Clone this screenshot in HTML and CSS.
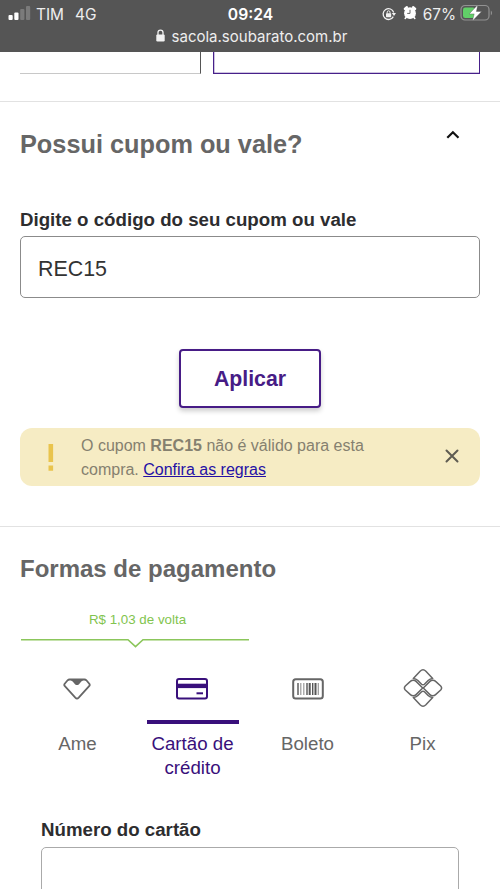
FILE: index.html
```html
<!DOCTYPE html>
<html lang="pt-BR">
<head>
<meta charset="utf-8">
<meta name="viewport" content="width=device-width, initial-scale=1">
<title>Sacola</title>
<link rel="stylesheet" href="styles.css">
</head>
<body>
<header class="browser">
  <div class="status">
    <div class="status-left">
      <svg class="signal" width="23" height="15" viewBox="0 0 23 15"><rect x=".5" y="10" width="4.2" height="5" rx="1" fill="#fff"/><rect x="6.3" y="7.5" width="4.2" height="7.5" rx="1" fill="#fff"/><rect x="12.2" y="4" width="4.2" height="11" rx="1" fill="#7b7b7b"/><rect x="18" y="1" width="4.2" height="14" rx="1" fill="#7b7b7b"/></svg>
      <span class="carrier">TIM</span>
      <span class="network">4G</span>
    </div>
    <div class="clock">09:24</div>
    <div class="status-right">
      <svg class="lock-rotation" width="14" height="14" viewBox="0 0 14 14"><path d="M11.3 9.6A5.4 5.4 0 1 1 11.7 5.5" fill="none" stroke="#f2f2f2" stroke-width="1.3"/><path d="M9.8 6H14l-2 2.9z" fill="#f2f2f2"/><rect x="4" y="6.2" width="5.2" height="4" rx=".6" fill="#f2f2f2"/><path d="M5.2 6.5V5.2a1.4 1.4 0 0 1 2.8 0v1.3" fill="none" stroke="#f2f2f2"/></svg>
      <svg class="alarm" width="14" height="15" viewBox="0 0 14 15"><circle cx="7" cy="8.2" r="5.9" fill="#fff"/><path d="M1.9 4 3.9 2.2M10.1 2.2l2 1.8" stroke="#fff" stroke-width="2.4" stroke-linecap="round"/><path d="m3 12.4-.8 1M11 12.4l.8 1" stroke="#fff" stroke-width="1.6" stroke-linecap="round"/><path d="M7 4.8V8.4H4.2" fill="none" stroke="#666"/></svg>
      <span class="percent">67%</span>
      <svg class="battery" width="33" height="18" viewBox="0 0 33 18"><rect x="1" y="1.5" width="28" height="14.5" rx="4" fill="none" stroke="#929292" stroke-width="1.2"/><rect x="3" y="3.5" width="12" height="10.5" rx="2.2" fill="#61cf68"/><path d="M30.8 6.4c1.6.7 1.6 4.1 0 4.8z" fill="#929292"/><path d="M17.800.8 9.2 9.900h5L12.400 17l9.200-9.500h-5.200z" fill="#fff" stroke="#555" stroke-width=".4"/></svg>
    </div>
  </div>
  <div class="address">
    <svg width="9" height="13" viewBox="0 0 9 13"><rect x=".3" y="5.4" width="8.4" height="7" rx="1.2" fill="#f2f2f2"/><path d="M2 6V3.6a2.5 2.5 0 0 1 5 0V6" fill="none" stroke="#f2f2f2" stroke-width="1.3"/></svg>
    <span class="url">sacola.soubarato.com.br</span>
  </div>
</header>

<main>
  <div class="options">
    <div class="option"></div>
    <div class="option option-active"></div>
  </div>

  <section class="coupon">
    <div class="coupon-head">
      <h2 class="coupon-title">Possui cupom ou vale?</h2>
      <svg class="chevron" width="14" height="10" viewBox="0 0 14 10"><path d="m1.3 7.8 5.6-5.5 5.6 5.5" fill="none" stroke="#111" stroke-width="2.200"/></svg>
    </div>
    <label class="label" for="coupon">Digite o código do seu cupom ou vale</label>
    <input class="field" id="coupon" value="REC15">
    <button class="apply">Aplicar</button>
    <div class="alert">
      <svg class="exclaim" width="6" height="27" viewBox="0 0 6 27"><path d="M.5 0h4.600v18H.5zM.5 21.500h4.600v5.300H.5z" fill="#e9c44d"/></svg>
      <p class="alert-text">O cupom <b>REC15</b> não é válido para esta<br>compra. <a href="#">Confira as regras</a></p>
      <svg class="close" width="14" height="14" viewBox="0 0 14 14"><path d="m1.500 1.500 11 11M12.500 1.500l-11 11" stroke="#5f5c52" stroke-width="2" stroke-linecap="round"/></svg>
    </div>
  </section>

  <section class="payment">
    <h2 class="payment-title">Formas de pagamento</h2>
    <div class="cashback">
      <span>R$ 1,03 de volta</span>
      <svg width="229" height="10" viewBox="0 0 229 10"><path d="M0 1.700H107l7.500 7 7.500-7h106" fill="none" stroke="#8bc65b" stroke-width="1.600"/></svg>
    </div>
    <nav class="tabs">
      <a class="tab">
        <span class="tab-icon"><svg width="28" height="22" viewBox="0 0 28 22"><path d="M6.500 1.500h15c.8 0 1.400.3 1.900.8l2.900 3.500c.6.8.5 1.700-.2 2.400L15.700 19.600c-1 1-2.400 1-3.400 0L1.900 8.200c-.7-.7-.8-1.600-.2-2.400L4.600 2.300c.5-.5 1.100-.8 1.900-.8z" fill="none" stroke="#666" stroke-width="1.800"/><path d="M7 1h14c-1 1.500-2 1.900-3.300 3.200l-1.700 2c-1.200 1.200-2.800 1.200-4 0l-1.700-2C9 2.900 8 2.500 7 1z" fill="#666"/></svg></span>
        <span class="tab-name">Ame</span>
      </a>
      <a class="tab tab-active">
        <span class="tab-icon"><svg width="32" height="22" viewBox="0 0 32 22"><rect x="1" y="1" width="30" height="19.500" rx="2" fill="none" stroke="#39107b" stroke-width="2"/><path d="M1 5.700h30v4.400H1z" fill="#39107b"/><path d="M20.500 15.300H27" stroke="#39107b" stroke-width="2"/></svg></span>
        <span class="tab-name">Cartão de crédito</span>
      </a>
      <a class="tab tab-boleto">
        <span class="tab-icon"><svg width="32" height="22" viewBox="0 0 32 22"><rect x="1.200" y="1.200" width="29.600" height="19.200" rx="2.500" fill="none" stroke="#666" stroke-width="2"/><path d="M6 5v12M15 5v12M20.700 5v12" stroke="#555" stroke-width="1.400"/><path d="M8.800 5v12M11.800 5v12M26.300 5v12" stroke="#999" stroke-width="1.200"/><path d="M17.700 5v12M23.500 5v12" stroke="#555" stroke-width="2"/></svg></span>
        <span class="tab-name">Boleto</span>
      </a>
      <a class="tab tab-pix">
        <span class="tab-icon"><svg width="40" height="40" viewBox="0 0 40 40"><g fill="none" stroke="#666" stroke-width="1.500" stroke-linejoin="round"><path d="M10.300 10.500 17.100 3.200c2-2 3.800-2 5.800 0l6.800 7.300c-2 .1-3.300.7-4.600 2L21.400 16.200q-1.400 1.200-2.800 0L14.900 12.500c-1.300-1.300-2.600-1.900-4.600-2z"/><path d="M10.300 29.500 17.100 36.800c2 2 3.800 2 5.800 0l6.800-7.300c-2-.1-3.300-.7-4.600-2L21.400 23.800q-1.400-1.200-2.800 0L14.900 27.500c-1.300 1.300-2.600 1.900-4.600 2z"/><path d="M19.700 20 13.100 13.400a4 4 0 0 0-5.700 0L2.300 18a3 3 0 0 0 0 4l5.100 4.600a4 4 0 0 0 5.700 0zM20.300 20l6.600-6.600a4 4 0 0 1 5.700 0l5.100 4.600a3 3 0 0 1 0 4l-5.100 4.600a4 4 0 0 1-5.700 0z"/></g></svg></span>
        <span class="tab-name">Pix</span>
      </a>
    </nav>
    <div class="card-form">
      <label class="label" for="card">Número do cartão</label>
      <input class="field field-card" id="card">
    </div>
  </section>
</main>
</body>
</html>
```
FILE: styles.css
```css
* { box-sizing: border-box; }
html, body { height: 889px; overflow: hidden; }
body { margin: 0; background: #fff; color: #666; font-family: "Liberation Sans", Arial, sans-serif; }
h2, p { margin: 0; }

.browser { height: 52px; background: #555; color: #eee; font: 15.4px/20px Inter, sans-serif; }
.status { display: grid; grid-template-columns: 1fr auto 1fr; height: 26px; padding: 4px 7px 0 8px; }
.status-left { display: flex; }
.signal { margin: 1px 6px 0 0; }
.carrier, .network, .clock, .percent { padding-top: 1px; }
.carrier { margin-left: -1px; }
.network { margin-left: 11px; }
.clock { color: #fff; font-weight: 600; font-size: 15.7px; }
.status-right { display: flex; justify-content: flex-end; }
.lock-rotation { margin: 3px 7px 0 0; }
.alarm { margin: 1px 6px 0 0; }
.battery { margin: 0 0 0 4px; }
.address { display: flex; justify-content: center; gap: 7px; padding-left: 3px; }
.address svg { margin-top: 3px; }
.url { font-size: 15px; line-height: 21px; }

.options { display: flex; gap: 12px; height: 49px; padding: 0 20px; }
.option { width: 181px; height: 22px; border: solid #555; border-width: 0 1px 1px 0; border-bottom-color: #c8c8c8; }
.option-active { width: 267px; border: solid #47208a; border-width: 0 1px 1px; box-shadow: inset 0 -1px #47208a44, inset 1px 0 #47208a44; }

.coupon { display: flex; flex-direction: column; height: 425px; border-top: 1px solid #e2e2e2; padding: 0 20px; }
.coupon-head { display: flex; justify-content: space-between; padding: 27px 20px 0 0; height: 104px; }
.coupon-title { font-size: 25.3px; line-height: 30px; }
.chevron { margin-top: 1px; }
.label { display: block; color: #2d2d2f; font-size: 18.7px; line-height: 28px; font-weight: 700; }
.field { display: block; width: 100%; height: 62px; margin-top: 3px; padding: 4px 17px 0; border: 1px solid #8b8b8b; border-radius: 5px; background: #fff; color: #333; font: 21.4px "Liberation Sans", Arial, sans-serif; }
.coupon .field { flex: none; margin-top: 2px; }
.coupon-head, .apply, .alert { flex: none; }
.apply { align-self: center; width: 142px; height: 59px; margin-top: 51px; padding: 2px 0 0; border: 2px solid #471c86; border-radius: 4px; background: #fff; box-shadow: 0 3px 5px #0003; color: #471c86; font: 700 21.3px "Liberation Sans", Arial, sans-serif; }
.alert { display: flex; height: 58px; margin-top: 20px; padding-right: 21px; border-radius: 12px; background: #f6ecc4; }
.exclaim { margin: 16px 27px 0 28px; }
.alert-text { flex: 1; padding-top: 6px; color: #85806f; font-size: 16px; line-height: 24px; }
.alert-text a { color: #2410a5; }
.close { margin-top: 21px; }

.payment { border-top: 1px solid #e2e2e2; }
.payment-title { padding: 27px 20px 0; font-size: 24px; line-height: 30px; }
.cashback { display: flex; flex-direction: column; width: 229px; margin: 28px 0 0 21px; color: #82c44e; font-size: 13.35px; line-height: 16px; text-align: center; }
.cashback span { padding-left: 4px; }
.cashback svg { margin-top: 10px; }
.tabs { display: flex; height: 132px; margin: 19px 20px 0; }
.tab { display: flex; flex-direction: column; align-items: center; width: 115px; }
.tab-icon { display: flex; align-items: center; justify-content: center; width: 92px; height: 57px; padding: 0 1px 10px 0; border-bottom: 4px solid transparent; }
.tab-boleto .tab-icon, .tab-pix .tab-icon { padding-right: 0; }
.tab-pix .tab-icon { padding-bottom: 11px; }
.tab-name { width: 100px; padding-top: 8px; font-size: 18.7px; line-height: 24px; text-align: center; }
.tab-active { color: #39107b; }
.tab-active .tab-icon { border-color: #39107b; }
.card-form { margin: 17px 41px 0; }
.field-card { border-color: #aaa; }
```
